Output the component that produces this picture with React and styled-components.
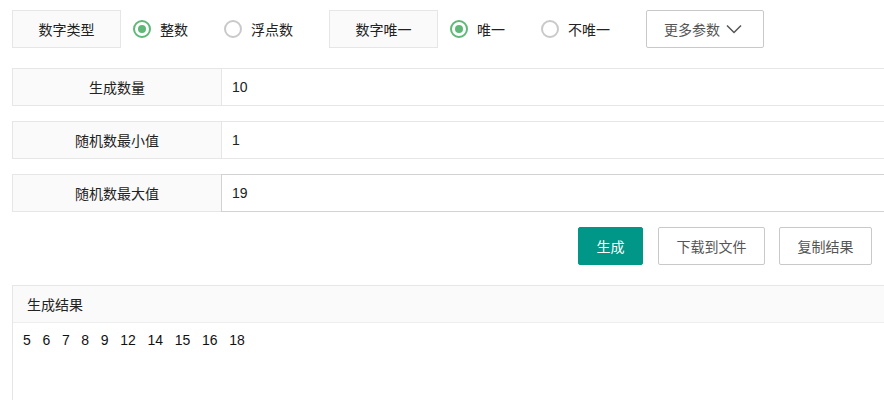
import React from "react";
import styled, { createGlobalStyle } from "styled-components";

const Global = createGlobalStyle`
  html, body { margin: 0; padding: 0; background: #fff; overflow: hidden; }
  body {
    font-family: "Liberation Sans", "Noto Sans CJK SC", sans-serif;
    font-size: 14px;
    color: #333;
  }
  * { box-sizing: border-box; }
`;

const Page = styled.div`
  padding: 10px 12px;
  width: 884px;
  height: 400px;
  overflow: hidden;
`;

const TopBar = styled.div`
  display: flex;
  align-items: center;
  gap: 12px;
  height: 38px;
`;

const LabelBox = styled.div`
  width: 109px;
  height: 38px;
  display: flex;
  align-items: center;
  justify-content: center;
  background: #fafafa;
  border: 1px solid #e6e6e6;
  color: #222;
`;

const Radio = styled.label`
  display: flex;
  align-items: center;
  gap: 9px;
  padding-right: 24px;
  color: #222;
  cursor: pointer;
`;

const RadioIcon = styled.span`
  width: 18px;
  height: 18px;
  border-radius: 50%;
  border: 2px solid ${(p) => (p.$on ? "#5fb878" : "#c9c9c9")};
  display: flex;
  align-items: center;
  justify-content: center;
  &::after {
    content: "";
    width: 8px;
    height: 8px;
    border-radius: 50%;
    background: ${(p) => (p.$on ? "#5fb878" : "transparent")};
  }
`;

const MoreButton = styled.button`
  width: 118px;
  height: 38px;
  display: flex;
  align-items: center;
  justify-content: center;
  gap: 6px;
  padding: 0 4px 0 0;
  background: #fff;
  border: 1px solid #c9c9c9;
  border-radius: 2px;
  color: #555;
  font: inherit;
`;

const Rows = styled.div`
  margin-top: 20px;
  display: flex;
  flex-direction: column;
  gap: 15px;
  margin-right: -40px;
`;

const Row = styled.div`
  display: flex;
  height: 38px;
`;

const RowLabel = styled.div`
  width: 209px;
  flex: none;
  display: flex;
  align-items: center;
  justify-content: center;
  background: #fafafa;
  border: 1px solid #e6e6e6;
  border-right: none;
  color: #222;
`;

const RowInput = styled.div`
  flex: 1;
  display: flex;
  align-items: center;
  padding-left: 10px;
  border: 1px solid ${(p) => (p.$hover ? "#d2d2d2" : "#e6e6e6")};
  color: #222;
`;

const Actions = styled.div`
  margin-top: 15px;
  display: flex;
  justify-content: flex-end;
  gap: 14px;
  & > :first-child { margin-right: 1px; }
`;

const Btn = styled.button`
  height: 38px;
  padding: 0 17.5px;
  border: 1px solid ${(p) => (p.$primary ? "#009688" : "#c9c9c9")};
  background: ${(p) => (p.$primary ? "#009688" : "#fff")};
  color: ${(p) => (p.$primary ? "#fff" : "#555")};
  border-radius: 2px;
  font: inherit;
  white-space: nowrap;
`;

const Panel = styled.div`
  margin-top: 20px;
  margin-right: -40px;
  border: 1px solid #e6e6e6;
  height: 140px;
`;

const PanelHead = styled.div`
  height: 37px;
  display: flex;
  align-items: center;
  padding-left: 14px;
  background: #fafafa;
  border-bottom: 1px solid #eee;
  color: #222;
`;

const PanelBody = styled.div`
  padding: 7px 10px;
  line-height: 20px;
  white-space: pre;
  color: #111;
`;

const Chevron = () => (
  <svg width="16" height="10" viewBox="0 0 16 10" fill="none">
    <path d="M1 1.5 L8 8.5 L15 1.5" stroke="#555" strokeWidth="1.5" />
  </svg>
);

const numbers = [5, 6, 7, 8, 9, 12, 14, 15, 16, 18];

export default function App() {
  return (
    <>
      <Global />
      <Page>
        <TopBar>
          <LabelBox>数字类型</LabelBox>
          <Radio><RadioIcon $on />整数</Radio>
          <Radio><RadioIcon />浮点数</Radio>
          <LabelBox>数字唯一</LabelBox>
          <Radio><RadioIcon $on />唯一</Radio>
          <Radio><RadioIcon />不唯一</Radio>
          <MoreButton>更多参数 <Chevron /></MoreButton>
        </TopBar>
        <Rows>
          <Row>
            <RowLabel>生成数量</RowLabel>
            <RowInput>10</RowInput>
          </Row>
          <Row>
            <RowLabel>随机数最小值</RowLabel>
            <RowInput>1</RowInput>
          </Row>
          <Row>
            <RowLabel>随机数最大值</RowLabel>
            <RowInput $hover>19</RowInput>
          </Row>
        </Rows>
        <Actions>
          <Btn $primary>生成</Btn>
          <Btn>下载到文件</Btn>
          <Btn>复制结果</Btn>
        </Actions>
        <Panel>
          <PanelHead>生成结果</PanelHead>
          <PanelBody>{numbers.join("   ")}</PanelBody>
        </Panel>
      </Page>
    </>
  );
}
